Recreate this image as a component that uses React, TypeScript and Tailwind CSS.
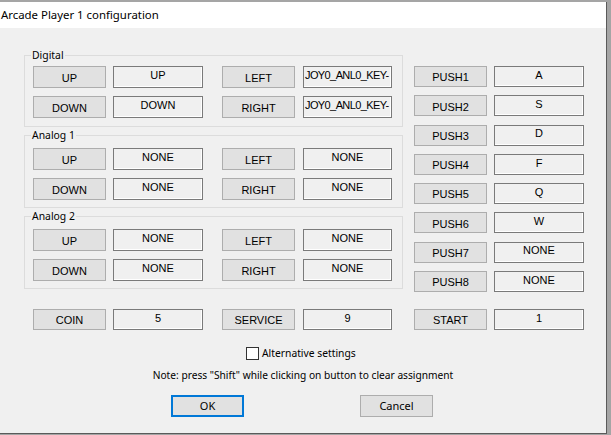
import { ReactNode } from 'react';

const ui = { fontFamily: '"Noto Sans", "Liberation Sans", sans-serif' };
const ctl = { fontFamily: 'Tahoma, "Liberation Sans", "DejaVu Sans", sans-serif' };

function Btn({ label, w = 'w-[73px]', h = 'h-[22px]' }: { label: string; w?: string; h?: string }) {
  return (
    <div
      style={ctl}
      className={`${w} ${h} shrink-0 bg-[#e1e1e1] border border-[#adadad] flex items-center justify-center pt-[2px] text-[11px] text-black`}
    >
      {label}
    </div>
  );
}

function Field({ value, w = 'w-[90px]', h = 'h-[22px]', left = false }: { value: string; w?: string; h?: string; left?: boolean }) {
  return (
    <div
      style={ctl}
      className={`${w} ${h} shrink-0 bg-[#f0f0f0] border border-[#7a7a7a] shadow-[inset_-1px_-1px_0_#ffffff] flex items-center pb-[3px] overflow-hidden whitespace-nowrap text-[11px] text-black ${
        left ? 'justify-start pl-[1px] tracking-[-0.6px]' : 'justify-center'
      }`}
    >
      {value}
    </div>
  );
}

function Row({ a, av, b, bv, wide = false }: { a: string; av: string; b: string; bv: string; wide?: boolean }) {
  return (
    <div className="flex items-center">
      <Btn label={a} />
      <div className="w-[7px]" />
      <Field value={av} />
      <div className="w-[19px]" />
      <Btn label={b} />
      <div className="w-[8px]" />
      <Field value={bv} w="w-[89px]" left={wide} />
    </div>
  );
}

function Group({ title, pt, pb, mt, children }: { title: string; pt: string; pb: string; mt: string; children: ReactNode }) {
  return (
    <fieldset className={`w-[379px] border border-[#dcdcdc] pl-[8px] ${pt} ${pb} ${mt}`}>
      <legend style={ui} className="ml-[-2px] px-[1px] text-[10.4px] leading-[13px] text-black">
        {title}
      </legend>
      <div className="flex flex-col gap-[8px]">{children}</div>
    </fieldset>
  );
}

const pushes = [
  ['PUSH1', 'A'],
  ['PUSH2', 'S'],
  ['PUSH3', 'D'],
  ['PUSH4', 'F'],
  ['PUSH5', 'Q'],
  ['PUSH6', 'W'],
  ['PUSH7', 'NONE'],
  ['PUSH8', 'NONE'],
];

export default function App() {
  return (
    <div className="w-[611px] h-[435px] bg-[#a5a5a5] pt-[2px] overflow-hidden">
      <div className="w-[607px] h-[432px] border-r border-b border-[#5a5a5a] bg-[#f0f0f0] flex flex-col">
        {/* Title bar */}
        <div style={ui} className="h-[26px] shrink-0 bg-white flex items-center pl-[1px] text-[11.4px] text-black">
          Arcade Player 1 configuration
        </div>

        <div className="flex flex-col pt-[21px]">
          {/* Groups + push column */}
          <div className="flex items-start pl-[24px]">
            <div className="flex flex-col">
              <Group title="Digital" pt="pt-[4px]" pb="pb-[8px]" mt="mt-0">
                <Row a="UP" av="UP" b="LEFT" bv="JOY0_ANL0_KEY-" wide />
                <Row a="DOWN" av="DOWN" b="RIGHT" bv="JOY0_ANL0_KEY-" wide />
              </Group>
              <Group title="Analog 1" pt="pt-[6px]" pb="pb-[7px]" mt="mt-[2px]">
                <Row a="UP" av="NONE" b="LEFT" bv="NONE" />
                <Row a="DOWN" av="NONE" b="RIGHT" bv="NONE" />
              </Group>
              <Group title="Analog 2" pt="pt-[6px]" pb="pb-[7px]" mt="mt-[2px]">
                <Row a="UP" av="NONE" b="LEFT" bv="NONE" />
                <Row a="DOWN" av="NONE" b="RIGHT" bv="NONE" />
              </Group>
            </div>

            <div className="ml-[11px] mt-[17px] h-[226px] flex flex-col justify-between">
              {pushes.map(([k, v]) => (
                <div key={k} className="flex items-center">
                  <Btn label={k} h="h-[21px]" />
                  <div className="w-[7px]" />
                  <Field value={v} h="h-[21px]" />
                </div>
              ))}
            </div>
          </div>

          {/* Coin / service / start */}
          <div className="flex items-center pl-[33px] mt-[17px]">
            <Btn label="COIN" h="h-[21px]" />
            <div className="w-[7px]" />
            <Field value="5" h="h-[21px]" />
            <div className="w-[19px]" />
            <Btn label="SERVICE" h="h-[21px]" />
            <div className="w-[8px]" />
            <Field value="9" w="w-[89px]" h="h-[21px]" />
            <div className="w-[22px]" />
            <Btn label="START" h="h-[21px]" />
            <div className="w-[7px]" />
            <Field value="1" h="h-[21px]" />
          </div>

          {/* Alternative settings */}
          <div style={ui} className="flex items-center h-[15px] mt-[16px] pl-[246px] text-[10.3px] text-black">
            <div className="w-[13px] h-[13px] border border-[#333333] bg-white shrink-0" />
            <span className="ml-[3px]">Alternative settings</span>
          </div>

          {/* Note */}
          <div style={ui} className="h-[14px] mt-[8px] flex items-center justify-center text-[10.2px] text-black">
            Note: press "Shift" while clicking on button to clear assignment
          </div>

          {/* Buttons */}
          <div style={ui} className="flex items-center mt-[12px] pl-[171px] text-[11px] text-black">
            <div className="w-[73px] h-[22px] bg-[#e1e1e1] border-2 border-[#0078d7] flex items-center justify-center">
              OK
            </div>
            <div className="w-[116px]" />
            <div className="w-[73px] h-[22px] bg-[#e1e1e1] border border-[#adadad] flex items-center justify-center">
              Cancel
            </div>
          </div>
        </div>
      </div>
    </div>
  );
}
